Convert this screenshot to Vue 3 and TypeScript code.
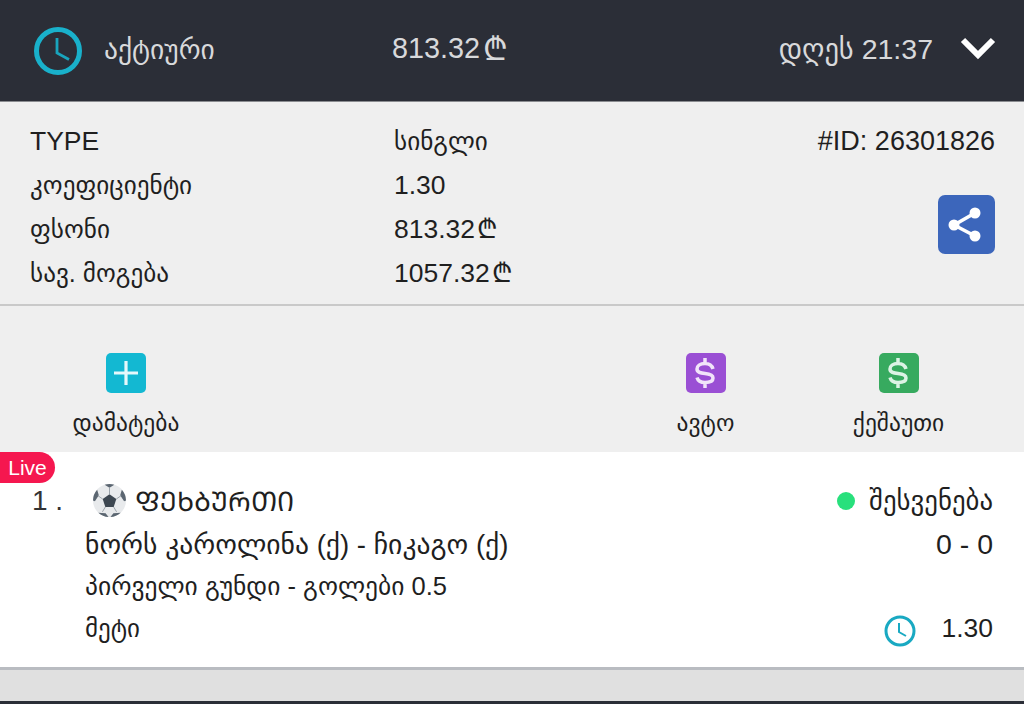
<script setup lang="ts">
interface InfoRow {
  label: string
  value: string
  geoLabel?: boolean
  geoValue?: boolean
  lari?: boolean
}

const rows: InfoRow[] = [
  { label: 'TYPE', value: 'სინგლი', geoValue: true },
  { label: 'კოეფიციენტი', value: '1.30', geoLabel: true },
  { label: 'ფსონი', value: '813.32', geoLabel: true, lari: true },
  { label: 'სავ. მოგება', value: '1057.32', geoLabel: true, lari: true },
]

const dollarPath =
  'M19 5v5.500M19 29.500V35M27 16C26 12.500 23 10.500 19 10.500C14 10.500 11 13 11 16C11 19.500 14.500 20 19 20.500C24 21 27 22 27 25C27 28 24 29.500 19 29.500C15 29.500 12 28 11 24.500'
</script>

<template>
  <div class="page">
    <header class="head">
      <div class="head-status">
        <svg class="clock-big" viewBox="0 0 50 50" fill="none">
          <circle cx="25" cy="25" r="21.500" stroke="#19b1cb" stroke-width="5" />
          <path d="M24 12v15l12 6.500" stroke="#19a5bd" stroke-width="2.800" />
        </svg>
        <span>აქტიური</span>
      </div>
      <div class="head-sum">813.32<span class="lari">₾</span></div>
      <div class="head-right">
        <span>დღეს 21:37</span>
        <svg class="chevron" viewBox="0 0 36 24" fill="none">
          <path d="M3 4l15 15L33 4" stroke="#fff" stroke-width="6" />
        </svg>
      </div>
    </header>

    <section class="info">
      <div class="info-rows">
        <div v-for="row in rows" :key="row.label" class="info-row">
          <span :class="{ geo: row.geoLabel }">{{ row.label }}</span>
          <span :class="{ geo: row.geoValue }">{{ row.value }}<span v-if="row.lari" class="lari-sm">₾</span></span>
        </div>
      </div>
      <div class="info-side">
        <div class="info-id">#ID: 26301826</div>
        <button class="share" type="button" aria-label="share">
          <svg viewBox="0 0 57 59" width="57" height="59">
            <path d="M16 30L37 18M16 30l21 11" stroke="#fff" stroke-width="3.600" fill="none" />
            <circle cx="16" cy="30" r="5.500" fill="#fff" />
            <circle cx="37" cy="18" r="5.500" fill="#fff" />
            <circle cx="37" cy="41" r="5.500" fill="#fff" />
          </svg>
        </button>
      </div>
    </section>

    <section class="actions">
      <div class="action action-add">
        <span class="action-icon teal">
          <svg viewBox="0 0 40 40" width="40" height="40">
            <path d="M20 8v24M8 20h24" stroke="currentColor" stroke-width="3.200" />
          </svg>
        </span>
        <span>დამატება</span>
      </div>
      <div class="action action-auto">
        <span class="action-icon purple">
          <svg viewBox="0 0 40 40" width="40" height="40" fill="none">
            <path :d="dollarPath" stroke="currentColor" stroke-width="3.500" />
          </svg>
        </span>
        <span>ავტო</span>
      </div>
      <div class="action action-cash">
        <span class="action-icon green">
          <svg viewBox="0 0 40 40" width="40" height="40" fill="none">
            <path :d="dollarPath" stroke="currentColor" stroke-width="3.500" />
          </svg>
        </span>
        <span>ქეშაუთი</span>
      </div>
    </section>

    <section class="bet">
      <span class="live">Live</span>
      <div class="bet-grid">
        <span class="bet-num">1 .</span>
        <div class="bet-sport">
          <svg class="ball" viewBox="0 0 36 36">
            <circle cx="18" cy="18" r="17" fill="#e8eaec" />
            <path d="M18 11.500l7 5-2.700 8.200h-8.600L11 16.500z" fill="#3d4751" />
            <path d="M13 1.800L18 5l5-3.200A17 17 0 0 0 13 1.800zM1 18l2 .8 4-6.300-1.700-5.500A17 17 0 0 0 1 18zM35 18l-2 .8-4-6.300 1.700-5.500A17 17 0 0 1 35 18zM6.500 30.500l7.500.7 3 3.800a17 17 0 0 1-10.500-4.500zM29.500 30.500l-7.500.7-3 3.800a17 17 0 0 0 10.500-4.500z" fill="#5b6671" />
            <path d="M18 5v6.500M25 16.500l5-3.500M22.300 24.700l3 5M13.700 24.700l-3 5M11 16.500l-5-3.500" stroke="#9aa2a9" stroke-width="1" />
          </svg>
          <span class="sport-name">ᲤᲔᲮᲑᲣᲠᲗᲘ</span>
        </div>
        <div class="bet-status"><i class="dot"></i>შესვენება</div>
        <span class="bet-line teams">ნორს კაროლინა (ქ) - ჩიკაგო (ქ)</span>
        <span class="bet-score">0 - 0</span>
        <span class="bet-line market">პირველი გუნდი - გოლები 0.5</span>
        <span></span>
        <span class="bet-line pick">მეტი</span>
        <div class="bet-odds">
          <svg class="clock-small" viewBox="0 0 32 32" fill="none">
            <circle cx="16" cy="16" r="14" stroke="#19a9c2" stroke-width="3" />
            <path d="M15 8v9l7 4" stroke="#19a9c2" stroke-width="2" />
          </svg>
          <span>1.30</span>
        </div>
      </div>
    </section>

    <div class="band"></div>
  </div>
</template>

<style>
html,
body {
  margin: 0;
  background: #2b2e37;
  overflow: hidden;
}
</style>

<style scoped>
.page {
  width: 1024px;
  height: 704px;
  font-family: "Liberation Sans", "DejaVu Sans", sans-serif;
  font-size: 26.5px;
  color: #1f1f1f;
  display: flex;
  flex-direction: column;
}

.head {
  height: 99px;
  flex: none;
  background: #2b2e37;
  border-bottom: 1px solid #8a8c90;
  color: #d8d9db;
  display: grid;
  grid-template-columns: 392px 1fr auto;
  align-items: center;
  font-size: 28.5px;
  padding-right: 28px;
  padding-bottom: 2px;
}

.head-status {
  display: flex;
  align-items: center;
  gap: 21px;
  padding-left: 33px;
  font-size: 27.5px;
}

.clock-big {
  width: 50px;
  height: 50px;
  margin-top: 2px;
}

.head-sum {
  font-size: 28.8px;
  margin-top: -2px;
}

.head-right {
  display: flex;
  align-items: center;
  gap: 27px;
}

.chevron {
  width: 36px;
  height: 24px;
  margin-bottom: 3px;
}

.lari {
  margin-left: 3px;
  font-size: 32px;
  line-height: 1;
  vertical-align: -2px;
}

.lari-sm {
  margin-left: 2px;
}

.geo {
  font-size: 25.2px;
}

.info {
  height: 204px;
  flex: none;
  box-sizing: border-box;
  border-bottom: 2px solid #c9c9c9;
  background: #efefef;
  padding: 17px 29px 0 30px;
  display: flex;
  justify-content: space-between;
}

.info-row {
  display: grid;
  grid-template-columns: 364px auto;
  height: 44px;
  line-height: 44px;
}

.info-side {
  display: flex;
  flex-direction: column;
  align-items: flex-end;
}

.info-id {
  line-height: 44px;
  font-size: 27px;
}

.share {
  width: 57px;
  height: 59px;
  margin-top: 32px;
  padding: 0;
  border: 0;
  border-radius: 7px;
  background: #3c66bb;
}

.share svg {
  display: block;
}

.actions {
  height: 146px;
  flex: none;
  background: #efefef;
  box-sizing: border-box;
  padding-top: 47px;
  padding-right: 29px;
  display: grid;
  grid-template-columns: 252px 1fr 193px 193px;
  font-size: 23.5px;
}

.action {
  display: flex;
  flex-direction: column;
  align-items: center;
  gap: 16px;
}

.action-add {
  grid-column: 1;
}

.action-auto {
  grid-column: 3;
}

.action-cash {
  grid-column: 4;
}

.action-icon {
  width: 40px;
  height: 40px;
  border-radius: 5px;
}

.action-icon svg {
  display: block;
}

.teal {
  background: #13b8d2;
  color: #e6f8fb;
}

.purple {
  background: #9a4fd4;
  color: #f1e4f9;
}

.green {
  background: #37aa5f;
  color: #dcf3e5;
}

.bet {
  position: relative;
  height: 215px;
  flex: none;
  background: #fff;
  box-sizing: border-box;
  padding: 27px 31px 0 32px;
}

.live {
  position: absolute;
  left: 0;
  top: 0;
  width: 55px;
  height: 31px;
  border-radius: 0 16px 16px 0;
  background: #f5174f;
  color: #fff;
  font-size: 21px;
  line-height: 31px;
  text-align: center;
}

.bet-grid {
  display: grid;
  grid-template-columns: 53px 1fr auto;
  grid-template-rows: 43px 45px 37px 48px;
  align-items: center;
}

.bet-num {
  grid-column: 1;
  grid-row: 1;
  font-size: 28px;
  color: #333;
}

.bet-sport {
  grid-column: 2;
  display: flex;
  align-items: center;
  gap: 8px;
  padding-left: 7px;
}

.ball {
  width: 35px;
  height: 35px;
}

.sport-name {
  font-size: 27px;
}

.bet-status {
  display: flex;
  align-items: center;
  gap: 14px;
  font-size: 26.8px;
}

.dot {
  width: 18px;
  height: 18px;
  border-radius: 50%;
  background: #28e07c;
}

.bet-line {
  grid-column: 2;
}

.teams {
  font-size: 27.6px;
}

.market {
  font-size: 25.5px;
}

.pick {
  font-size: 25px;
}

.bet-score {
  text-align: right;
  font-size: 28.5px;
}

.bet-odds {
  display: flex;
  align-items: center;
  justify-content: flex-end;
  gap: 25px;
}

.clock-small {
  width: 32px;
  height: 32px;
  margin-top: 6px;
}

.band {
  flex: none;
  height: 31px;
  background: #e0e0e0;
  border-top: 3px solid #b9bcc1;
}
</style>
